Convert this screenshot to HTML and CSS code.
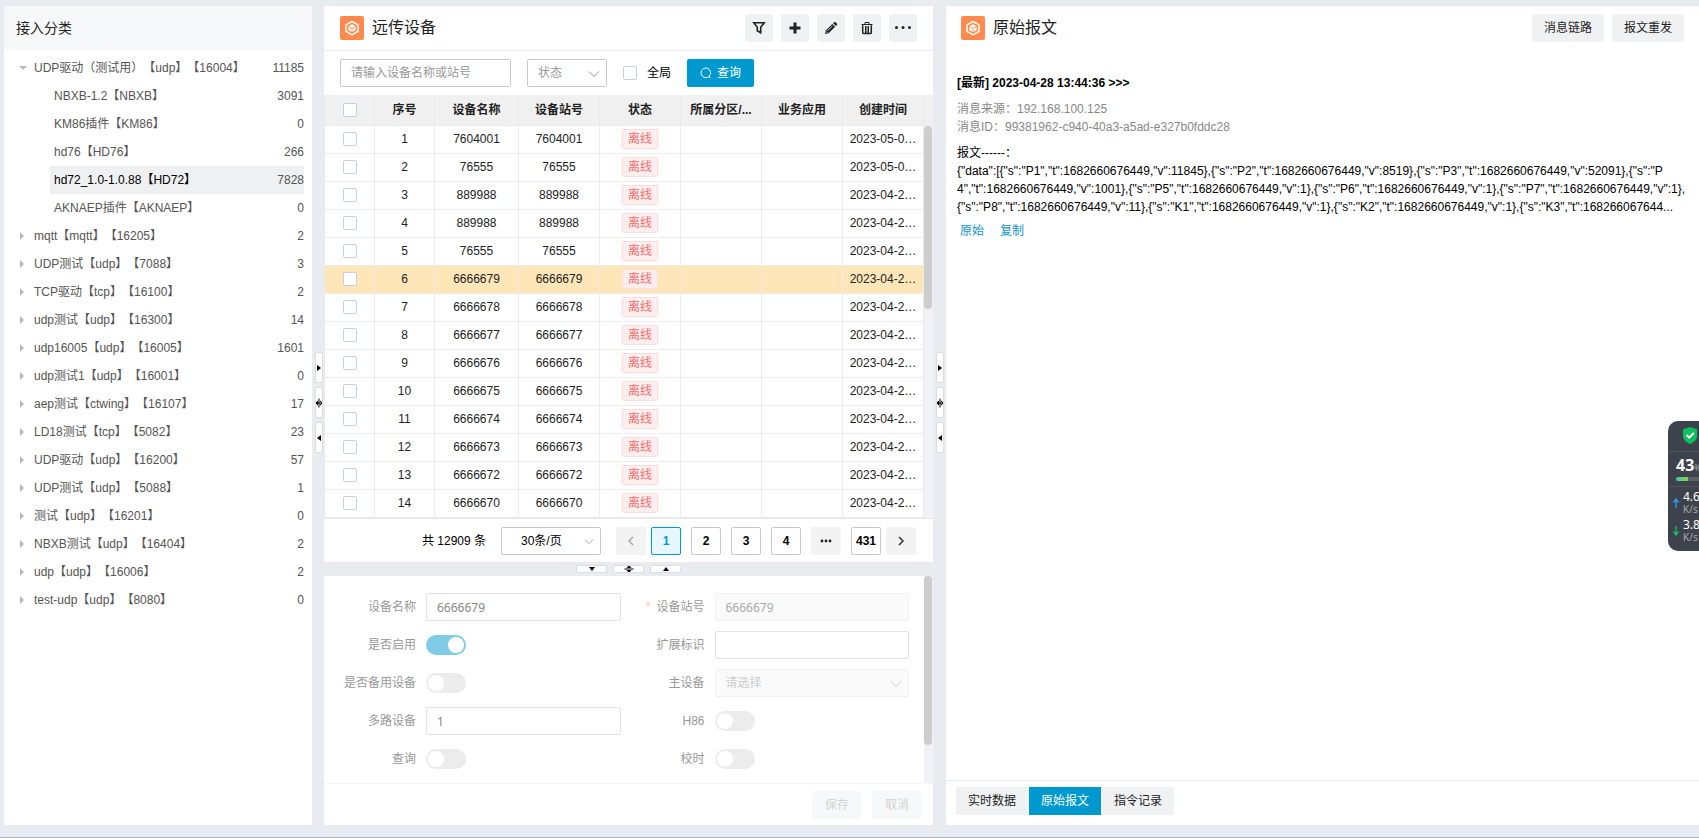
FILE: index.html
```html
<!DOCTYPE html>
<html lang="zh-CN">
<head>
<meta charset="utf-8">
<title>远传设备</title>
<link rel="stylesheet" href="styles.css">
</head>
<body>
<svg class="defs" width="0" height="0" aria-hidden="true">
  <symbol id="cube" viewBox="0 0 24 24"><path d="M12 5.500l6 3.300v6.600l-6 3.400-6-3.400V8.800z" fill="none" stroke="#fff" stroke-width="1.500" stroke-linejoin="round"/><path d="M12 8.300l3.600 2v3.900L12 16.300l-3.600-2.100v-3.900z" fill="#fff"/><path d="M8.400 10.300L12 12.300l3.600-2M12 12.300v4" fill="none" stroke="#ff8a4c" stroke-width=".9"/></symbol>
  <symbol id="chevron" viewBox="0 0 12 8"><path d="M1 1.500l5 5 5-5" fill="none" stroke="currentColor"/></symbol>
</svg>
<main class="app">
  <aside class="panel tree-panel">
    <h2 class="tree-title">接入分类</h2>
    <ul class="tree">
      <li class="node open"><span class="name">UDP驱动（测试用）【udp】【16004】</span><span class="count">11185</span></li>
      <li class="node child"><span class="name">NBXB-1.2【NBXB】</span><span class="count">3091</span></li>
      <li class="node child"><span class="name">KM86插件【KM86】</span><span class="count">0</span></li>
      <li class="node child"><span class="name">hd76【HD76】</span><span class="count">266</span></li>
      <li class="node child selected"><span class="name">hd72_1.0-1.0.88【HD72】</span><span class="count">7828</span></li>
      <li class="node child"><span class="name">AKNAEP插件【AKNAEP】</span><span class="count">0</span></li>
      <li class="node"><span class="name">mqtt【mqtt】【16205】</span><span class="count">2</span></li>
      <li class="node"><span class="name">UDP测试【udp】【7088】</span><span class="count">3</span></li>
      <li class="node"><span class="name">TCP驱动【tcp】【16100】</span><span class="count">2</span></li>
      <li class="node"><span class="name">udp测试【udp】【16300】</span><span class="count">14</span></li>
      <li class="node"><span class="name">udp16005【udp】【16005】</span><span class="count">1601</span></li>
      <li class="node"><span class="name">udp测试1【udp】【16001】</span><span class="count">0</span></li>
      <li class="node"><span class="name">aep测试【ctwing】【16107】</span><span class="count">17</span></li>
      <li class="node"><span class="name">LD18测试【tcp】【5082】</span><span class="count">23</span></li>
      <li class="node"><span class="name">UDP驱动【udp】【16200】</span><span class="count">57</span></li>
      <li class="node"><span class="name">UDP测试【udp】【5088】</span><span class="count">1</span></li>
      <li class="node"><span class="name">测试【udp】【16201】</span><span class="count">0</span></li>
      <li class="node"><span class="name">NBXB测试【udp】【16404】</span><span class="count">2</span></li>
      <li class="node"><span class="name">udp【udp】【16006】</span><span class="count">2</span></li>
      <li class="node"><span class="name">test-udp【udp】【8080】</span><span class="count">0</span></li>
    </ul>
  </aside>

  <div class="split-v">
    <button class="grip" aria-label="向右"><svg width="8" height="12" viewBox="0 0 8 12"><path d="M2 3l4 3-4 3z"/></svg></button>
    <button class="grip" aria-label="还原"><svg width="8" height="12" viewBox="0 0 8 12"><path d="M0 6l3-2.500v5zM8 6L5 3.500v5zM3.500 1.500h1v9h-1zM2 5.500h4v1H2z"/></svg></button>
    <button class="grip" aria-label="向左"><svg width="8" height="12" viewBox="0 0 8 12"><path d="M6 3L2 6l4 3z"/></svg></button>
  </div>

  <div class="middle">
    <section class="panel list-panel">
      <header class="panel-head lined">
        <svg class="logo" width="24" height="24"><use href="#cube"/></svg>
        <h1>远传设备</h1>
        <div class="tools">
          <button class="tool" aria-label="筛选"><svg width="14" height="14" viewBox="0 0 14 14"><path d="M1.800 1.700h10.400L8.700 6.300v5.500L5.300 9.800V6.300z" fill="none" stroke="#222" stroke-width="1.600"/></svg></button>
          <button class="tool" aria-label="新增"><svg width="14" height="14" viewBox="0 0 14 14"><path d="M7 1.500v11M1.500 7h11" stroke="#222" stroke-width="3"/></svg></button>
          <button class="tool" aria-label="编辑"><svg width="14" height="14" viewBox="0 0 14 14"><path d="M1 13l.8-3.600L8.300 3l2.800 2.800-6.500 6.400zM9.100 2.200l1-1c.4-.4 1-.4 1.400 0l1.400 1.400c.4.4.4 1 0 1.400l-1 1z" fill="#222"/><path d="M3.500 9.800l5-5M2 10.500l1.500 1.500" stroke="#f0f1f3" stroke-width=".8"/></svg></button>
          <button class="tool" aria-label="删除"><svg width="14" height="14" viewBox="0 0 14 14"><path d="M2.700 4.200v7.600c0 .4.300.7.700.7h7.200c.4 0 .7-.3.700-.7V4.200" fill="none" stroke="#222" stroke-width="1.500"/><path d="M1.500 3.500h11M5 3V1.500h4V3M5.500 5v7M8.500 5v7M7 5v7" fill="none" stroke="#222"/></svg></button>
          <button class="tool" aria-label="更多"><svg width="18" height="6" viewBox="0 0 18 6"><g fill="#222"><circle cx="2.500" cy="2.500" r="1.500"/><circle cx="9" cy="2.500" r="1.500"/><circle cx="15.500" cy="2.500" r="1.500"/></g></svg></button>
        </div>
      </header>
      <form class="search">
        <input class="field keyword" type="text" aria-label="设备名称或站号" placeholder="请输入设备名称或站号">
        <span class="pick state"><select class="field" aria-label="状态"><option>状态</option></select><svg width="12" height="8"><use href="#chevron"/></svg></span>
        <label class="global"><input class="box" type="checkbox">全局</label>
        <button class="query" type="button"><svg width="12" height="12" viewBox="0 0 12 12"><circle cx="5.800" cy="5.800" r="4.800" fill="none" stroke="#fff"/><path d="M8.700 9l1.800 2.200" stroke="#fff"/></svg>查询</button>
      </form>
      <div class="grid-area">
        <table class="grid">
          <colgroup><col class="c-check"><col class="c-no"><col class="c-name"><col><col><col><col><col></colgroup>
          <thead><tr><th><input class="box" type="checkbox" aria-label="全选"></th><th>序号</th><th>设备名称</th><th>设备站号</th><th>状态</th><th>所属分区/...</th><th>业务应用</th><th>创建时间</th></tr></thead>
          <tbody>
            <tr><td><input class="box" type="checkbox" aria-label="选择1"></td><td>1</td><td>7604001</td><td>7604001</td><td><span class="tag">离线</span></td><td></td><td></td><td>2023-05-0…</td></tr>
            <tr><td><input class="box" type="checkbox" aria-label="选择2"></td><td>2</td><td>76555</td><td>76555</td><td><span class="tag">离线</span></td><td></td><td></td><td>2023-05-0…</td></tr>
            <tr><td><input class="box" type="checkbox" aria-label="选择3"></td><td>3</td><td>889988</td><td>889988</td><td><span class="tag">离线</span></td><td></td><td></td><td>2023-04-2…</td></tr>
            <tr><td><input class="box" type="checkbox" aria-label="选择4"></td><td>4</td><td>889988</td><td>889988</td><td><span class="tag">离线</span></td><td></td><td></td><td>2023-04-2…</td></tr>
            <tr><td><input class="box" type="checkbox" aria-label="选择5"></td><td>5</td><td>76555</td><td>76555</td><td><span class="tag">离线</span></td><td></td><td></td><td>2023-04-2…</td></tr>
            <tr class="current"><td><input class="box" type="checkbox" aria-label="选择6"></td><td>6</td><td>6666679</td><td>6666679</td><td><span class="tag">离线</span></td><td></td><td></td><td>2023-04-2…</td></tr>
            <tr><td><input class="box" type="checkbox" aria-label="选择7"></td><td>7</td><td>6666678</td><td>6666678</td><td><span class="tag">离线</span></td><td></td><td></td><td>2023-04-2…</td></tr>
            <tr><td><input class="box" type="checkbox" aria-label="选择8"></td><td>8</td><td>6666677</td><td>6666677</td><td><span class="tag">离线</span></td><td></td><td></td><td>2023-04-2…</td></tr>
            <tr><td><input class="box" type="checkbox" aria-label="选择9"></td><td>9</td><td>6666676</td><td>6666676</td><td><span class="tag">离线</span></td><td></td><td></td><td>2023-04-2…</td></tr>
            <tr><td><input class="box" type="checkbox" aria-label="选择10"></td><td>10</td><td>6666675</td><td>6666675</td><td><span class="tag">离线</span></td><td></td><td></td><td>2023-04-2…</td></tr>
            <tr><td><input class="box" type="checkbox" aria-label="选择11"></td><td>11</td><td>6666674</td><td>6666674</td><td><span class="tag">离线</span></td><td></td><td></td><td>2023-04-2…</td></tr>
            <tr><td><input class="box" type="checkbox" aria-label="选择12"></td><td>12</td><td>6666673</td><td>6666673</td><td><span class="tag">离线</span></td><td></td><td></td><td>2023-04-2…</td></tr>
            <tr><td><input class="box" type="checkbox" aria-label="选择13"></td><td>13</td><td>6666672</td><td>6666672</td><td><span class="tag">离线</span></td><td></td><td></td><td>2023-04-2…</td></tr>
            <tr><td><input class="box" type="checkbox" aria-label="选择14"></td><td>14</td><td>6666670</td><td>6666670</td><td><span class="tag">离线</span></td><td></td><td></td><td>2023-04-2…</td></tr>
          </tbody>
        </table>
        <div class="rail grid-rail"><div class="thumb"></div></div>
      </div>
      <nav class="pager" aria-label="分页">
        <span class="total">共 12909 条</span>
        <span class="pick size"><select class="field" aria-label="每页条数"><option>30条/页</option></select><svg width="10" height="7" viewBox="0 0 12 8"><use href="#chevron"/></svg></span>
        <button class="page arrow" disabled aria-label="上一页"><svg width="8" height="12" viewBox="0 0 8 12"><path d="M6 2L2 6l4 4" fill="none" stroke="#aaa" stroke-width="1.500"/></svg></button>
        <div class="pages">
          <button class="page active">1</button><button class="page">2</button><button class="page">3</button><button class="page">4</button>
          <button class="page arrow" aria-label="更多页"><svg width="12" height="4" viewBox="0 0 12 4"><g fill="#222"><circle cx="2" cy="2" r="1.400"/><circle cx="6" cy="2" r="1.400"/><circle cx="10" cy="2" r="1.400"/></g></svg></button>
          <button class="page">431</button>
        </div>
        <button class="page arrow" aria-label="下一页"><svg width="8" height="12" viewBox="0 0 8 12"><path d="M2 2l4 4-4 4" fill="none" stroke="#333" stroke-width="1.500"/></svg></button>
      </nav>
    </section>

    <div class="split-h">
      <button class="grip" aria-label="向下"><svg width="12" height="6" viewBox="0 0 12 6"><path d="M3 1h6L6 5z"/></svg></button>
      <button class="grip" aria-label="还原"><svg width="12" height="8" viewBox="0 0 12 8"><path d="M6 0l2.500 3h-5zM6 8l2.500-3h-5zM1.500 3.500h9v1h-9z"/></svg></button>
      <button class="grip" aria-label="向上"><svg width="12" height="6" viewBox="0 0 12 6"><path d="M3 5h6L6 1z"/></svg></button>
    </div>

    <section class="panel detail-panel">
      <div class="detail-body">
        <form class="detail">
          <label for="dn">设备名称</label><input id="dn" class="field" type="text" value="6666679">
          <label for="ds"><i>*</i>设备站号</label><input id="ds" class="field off" type="text" value="6666679" disabled>
          <label for="en">是否启用</label><input id="en" class="switch" type="checkbox" checked>
          <label for="ex">扩展标识</label><input id="ex" class="field" type="text">
          <label for="bk">是否备用设备</label><input id="bk" class="switch" type="checkbox">
          <label for="ms">主设备</label><span class="pick main"><select id="ms" class="field off" disabled><option>请选择</option></select><svg width="12" height="8"><use href="#chevron"/></svg></span>
          <label for="mu">多路设备</label><input id="mu" class="field" type="text" value="1">
          <label for="h8">H86</label><input id="h8" class="switch" type="checkbox">
          <label for="qu">查询</label><input id="qu" class="switch" type="checkbox">
          <label for="ti">校时</label><input id="ti" class="switch" type="checkbox">
        </form>
        <div class="rail form-rail"><div class="thumb"></div></div>
      </div>
      <footer class="detail-foot"><button disabled>保存</button><button disabled>取消</button></footer>
    </section>
  </div>

  <div class="split-v">
    <button class="grip" aria-label="向右"><svg width="8" height="12" viewBox="0 0 8 12"><path d="M2 3l4 3-4 3z"/></svg></button>
    <button class="grip" aria-label="还原"><svg width="8" height="12" viewBox="0 0 8 12"><path d="M0 6l3-2.500v5zM8 6L5 3.500v5zM3.500 1.500h1v9h-1zM2 5.500h4v1H2z"/></svg></button>
    <button class="grip" aria-label="向左"><svg width="8" height="12" viewBox="0 0 8 12"><path d="M6 3L2 6l4 3z"/></svg></button>
  </div>

  <section class="panel message-panel">
    <header class="panel-head">
      <svg class="logo" width="24" height="24"><use href="#cube"/></svg>
      <h1>原始报文</h1>
      <div class="tools"><button class="btn">消息链路</button><button class="btn">报文重发</button></div>
    </header>
    <article class="message">
      <h3>[最新] 2023-04-28 13:44:36 &gt;&gt;&gt;</h3>
      <p class="meta">消息来源：192.168.100.125<br>消息ID：99381962-c940-40a3-a5ad-e327b0fddc28</p>
      <p class="label">报文------：</p>
      <p class="json">{"data":[{"s":"P1","t":1682660676449,"v":11845},{"s":"P2","t":1682660676449,"v":8519},{"s":"P3","t":1682660676449,"v":52091},{"s":"P<wbr>4","t":1682660676449,"v":1001},{"s":"P5","t":1682660676449,"v":1},{"s":"P6","t":1682660676449,"v":1},{"s":"P7","t":1682660676449,"v":1},{"s":"P8","t":1682660676449,"v":11},{"s":"K1","t":1682660676449,"v":1},{"s":"K2","t":1682660676449,"v":1},{"s":"K3","t":168266067644...</p>
      <p class="links"><a href="#raw">原始</a><a href="#copy">复制</a></p>
    </article>
    <footer class="tabs"><button class="btn">实时数据</button><button class="btn on">原始报文</button><button class="btn">指令记录</button></footer>
  </section>
</main>

<aside class="monitor">
  <div class="shield"><svg width="14" height="17" viewBox="0 0 14 17"><path d="M7 0l7 2.300V9c0 4-3.500 6.500-7 8-3.500-1.500-7-4-7-8V2.300z" fill="#0cbf5f"/><path d="M3.500 8l2.700 2.700L10.800 6" fill="none" stroke="#fff" stroke-width="2"/></svg></div>
  <div class="load"><b>43</b><small>%</small><div class="bar"><span></span></div></div>
  <div class="rates">
    <svg width="6" height="10" viewBox="0 0 6 10"><path d="M3 1v9M.5 4.500L3 1l2.500 3.500" fill="none" stroke="#23a0f5" stroke-width="1.300"/></svg><span>4.6<small>K/s</small></span>
    <svg width="6" height="10" viewBox="0 0 6 10"><path d="M3 0v9M.5 5.500L3 9l2.500-3.500" fill="none" stroke="#12c062" stroke-width="1.300"/></svg><span>3.8<small>K/s</small></span>
  </div>
</aside>
</body>
</html>
```

FILE: styles.css
```css
* { box-sizing: border-box; }

body {
  margin: 0;
  height: 100vh;
  background: #e8ebf0;
  color: #222;
  font: 12px/18px "Liberation Sans", "Noto Sans CJK SC", sans-serif;
  text-spacing-trim: space-all;
  overflow: hidden;
}

h1, h2, h3, p, ul { margin: 0; padding: 0; font-weight: normal; }
button, input, select { font: inherit; color: inherit; margin: 0; }
button { border: 0; padding: 0; border-radius: 2px; cursor: pointer; }
svg { display: block; flex: none; }
.defs { position: absolute; }

.app {
  display: grid;
  grid-template-columns: 308px 12px minmax(0, 609fr) 12px minmax(0, 754fr);
  height: 100vh;
  padding: 6px 0 12px 4px;
  border-bottom: 1px solid #aab2bd;
}

.panel { background: #fff; display: flex; flex-direction: column; min-width: 0; min-height: 0; }

/* category tree */
.tree-title { height: 44px; padding: 0 12px; background: #f7f8fa; font-size: 14px; line-height: 44px; }
.tree { list-style: none; padding: 4px 8px 0 15px; }
.node { display: flex; justify-content: space-between; align-items: center; height: 28px; color: #555; white-space: nowrap; }
.node::before { content: ""; border: 4px solid transparent; border-left: 4px solid #bbb; border-right: 0; margin: 0 10px 0 1px; }
.node.open::before { border: 4px solid transparent; border-top: 4px solid #bbb; border-bottom: 0; margin: 0 7px 0 0; }
.node .name { flex: 1; }
.node.child { margin-left: 31px; padding-left: 4px; }
.node.child::before { display: none; }
.node.selected { background: #eff0f2; }
.node.selected .name { color: #000; }

/* splitters */
.split-v, .split-h { display: flex; align-items: center; justify-content: center; }
.split-v { flex-direction: column; align-items: flex-end; gap: 4px; padding: 0 1px 26px 0; }
.grip { display: flex; align-items: center; justify-content: center; background: #fff; border: 1px solid #ddd; border-radius: 2px; overflow: hidden; }
.split-v .grip { width: 8px; height: 31px; }
.split-h { gap: 6px; height: 14px; flex: none; }
.split-h .grip { width: 31px; height: 8px; }

/* panel head */
.middle { display: flex; flex-direction: column; min-width: 0; min-height: 0; }
.panel-head { display: flex; align-items: center; height: 44px; padding: 0 16px; flex: none; }
.panel-head.lined { height: 45px; border-bottom: 1px solid #e8ebf0; }
.panel-head h1 { font-size: 16px; line-height: 24px; margin-left: 8px; flex: 1; }
.logo { background: #ff8a4c; border-radius: 2px; }
.tools { display: flex; gap: 8px; }
.tool, .btn { display: flex; align-items: center; justify-content: center; height: 28px; background: #f0f1f3; }
.tool { width: 28px; }
.btn { width: 72px; }

/* controls */
.field { width: 100%; height: 28px; padding: 0 10px; background: #fff; border: 1px solid #c9c9c9; border-radius: 2px; outline: 0; appearance: none; }
.field::placeholder { color: #999; }
.pick { position: relative; display: block; }
.pick svg { position: absolute; right: 7px; top: 11px; color: #999; pointer-events: none; }
.box { appearance: none; display: block; width: 14px; height: 14px; background: #fff; border: 1px solid #c5d0db; border-radius: 2px; }

.list-panel { flex: 556 1 0; }
.search { display: flex; align-items: center; gap: 16px; padding: 8px 16px; flex: none; }
.keyword { width: 171px; }
.state { width: 80px; }
.state .field { color: #999; }
.global { display: flex; align-items: center; gap: 10px; color: #000; }
.query { display: flex; align-items: center; justify-content: center; gap: 5px; width: 67px; height: 28px; background: #0099cf; color: #fff; }

/* device grid */
.grid-area { display: flex; flex: 1; min-height: 0; overflow: hidden; border-bottom: 1px solid #e8e8e8; }
.grid { flex: 1; width: 100%; table-layout: fixed; border-collapse: separate; border-spacing: 0; text-align: center; }
.c-check { width: 51px; }
.c-no { width: 60px; }
.c-name { width: 84px; }
.grid th, .grid td { height: 28px; padding: 0; border: solid #ebebeb; border-width: 0 1px 1px 0; white-space: nowrap; overflow: hidden; line-height: 18px; }
.grid td { padding-bottom: 2px; }
.grid th:first-child, .grid td:first-child { border-left-width: 1px; }
.grid th { height: 31px; background: #f0f0f0; font-weight: bold; }
.grid .box { margin: 0 auto; }
.grid .current td { background: #ffe6b8; }
.tag { display: block; width: 36px; height: 20px; margin: 0 auto; background: #ffeeee; border: 1px solid #ffdcdc; border-radius: 2px; color: #f76b6b; }
.rail { width: 9px; flex: none; background: #f1f2f5; }
.thumb { background: #cdcdcd; border-radius: 4px; width: 8px; }
.grid-rail { border-top: 31px solid #f0f0f0; }
.grid-rail .thumb { height: 183px; }

/* pagination */
.pager { display: flex; align-items: center; height: 43px; flex: none; justify-content: flex-end; padding: 0 17px 0 16px; color: #000; }
.size { width: 100px; margin: 0 15px; }
.size .field { padding-left: 19px; }
.pages { display: flex; gap: 10px; margin: 0 5px; }
.page { display: flex; align-items: center; justify-content: center; width: 30px; height: 28px; background: #fff; border: 1px solid #c9c9c9; font-weight: bold; }
.page.arrow { background: #f3f3f3; border: 0; }
.page.active { background: #e6f7ff; border-color: #0099cf; color: #0099cf; }

/* detail form */
.detail-panel { flex: 249 1 0; }
.detail-body { display: flex; flex: 1; min-height: 0; overflow: hidden; border-bottom: 1px solid #f3f4f6; }
.detail { flex: 1; display: grid; grid-template-columns: 102px minmax(0, 1fr) 94px minmax(0, 1fr); grid-auto-rows: 28px; gap: 10px 0; align-items: center; padding: 17px 15px 0 0; color: #999; }
.detail label { text-align: right; padding-right: 10px; }
.detail label i { color: #fbb; font-style: normal; margin-right: 6px; }
.detail .field { border-color: #e4e4e4; color: #888; font-family: "Noto Sans", "Noto Sans CJK SC", sans-serif; }
.detail .field.off { background: #fafafa; border-color: #f1f1f1; color: #aaa; opacity: 1; }
.detail select.off { color: #ccc; }
.detail .pick .field.off { color: #ccc; }
.detail .pick svg { color: #ccc; }
.switch { appearance: none; width: 40px; height: 20px; border-radius: 10px; background: #ececec; padding: 2px; display: flex; }
.switch::before { content: ""; width: 16px; height: 16px; border-radius: 8px; background: #fff; }
.switch:checked { background: #80cce7; justify-content: flex-end; }
.form-rail .thumb { height: 169px; }
.detail-foot { display: flex; justify-content: flex-end; align-items: center; gap: 10px; height: 41px; flex: none; padding: 0 11px; }
.detail-foot button { width: 50px; height: 28px; background: #f7f8f9; color: #d3d3d3; }

/* message */
.message-panel { border-left: 1px solid #e8ebf0; }
.message-panel .panel-head { padding: 0 15px; }
.message { flex: 1; padding: 24px 12px 0 11px; color: #000; }
.message h3 { font-size: 12px; font-weight: bold; margin-bottom: 8px; line-height: 18px; }
.message .meta { color: #888; margin-bottom: 8px; }
.message .json { overflow-wrap: anywhere; word-break: break-all; }
.message .links { display: flex; gap: 16px; padding: 6px 3px; }
.message a { color: #0a95cb; text-decoration: none; }
.tabs { display: flex; gap: 1px; height: 45px; flex: none; padding: 6px 10px; border-top: 1px solid #e8ebf0; }
.tabs .btn.on { background: #0099cf; color: #fff; border-radius: 0; }

/* system monitor docked at the screen edge */
.monitor { position: fixed; right: 0; top: 421px; width: 31px; height: 130px; overflow: hidden; background: #3e424c; border-radius: 10px 0 0 10px; color: #fff; font-family: "Noto Sans", sans-serif; }
.shield { padding: 6px 0 0 15px; height: 31px; border-bottom: 1px solid #50545d; }
.load { height: 35px; padding: 4px 0 0 8px; white-space: nowrap; border-bottom: 1px solid #50545d; line-height: 19px; }
.load b { font-size: 16px; }
.load small, .rates small { color: #a7a9ae; font-size: 10px; }
.load small { font-size: 8px; }
.bar { height: 4px; background: #5b5f68; border-radius: 2px 0 0 2px; overflow: hidden; }
.bar span { display: block; width: 12px; height: 4px; background: linear-gradient(90deg, #3cc6b0, #8bd346); }
.rates { display: grid; grid-template-columns: 6px 1fr; gap: 4px; padding: 4px 0 0 5px; align-items: center; line-height: 12px; font-size: 12px; }
.rates small { display: block; }
```
